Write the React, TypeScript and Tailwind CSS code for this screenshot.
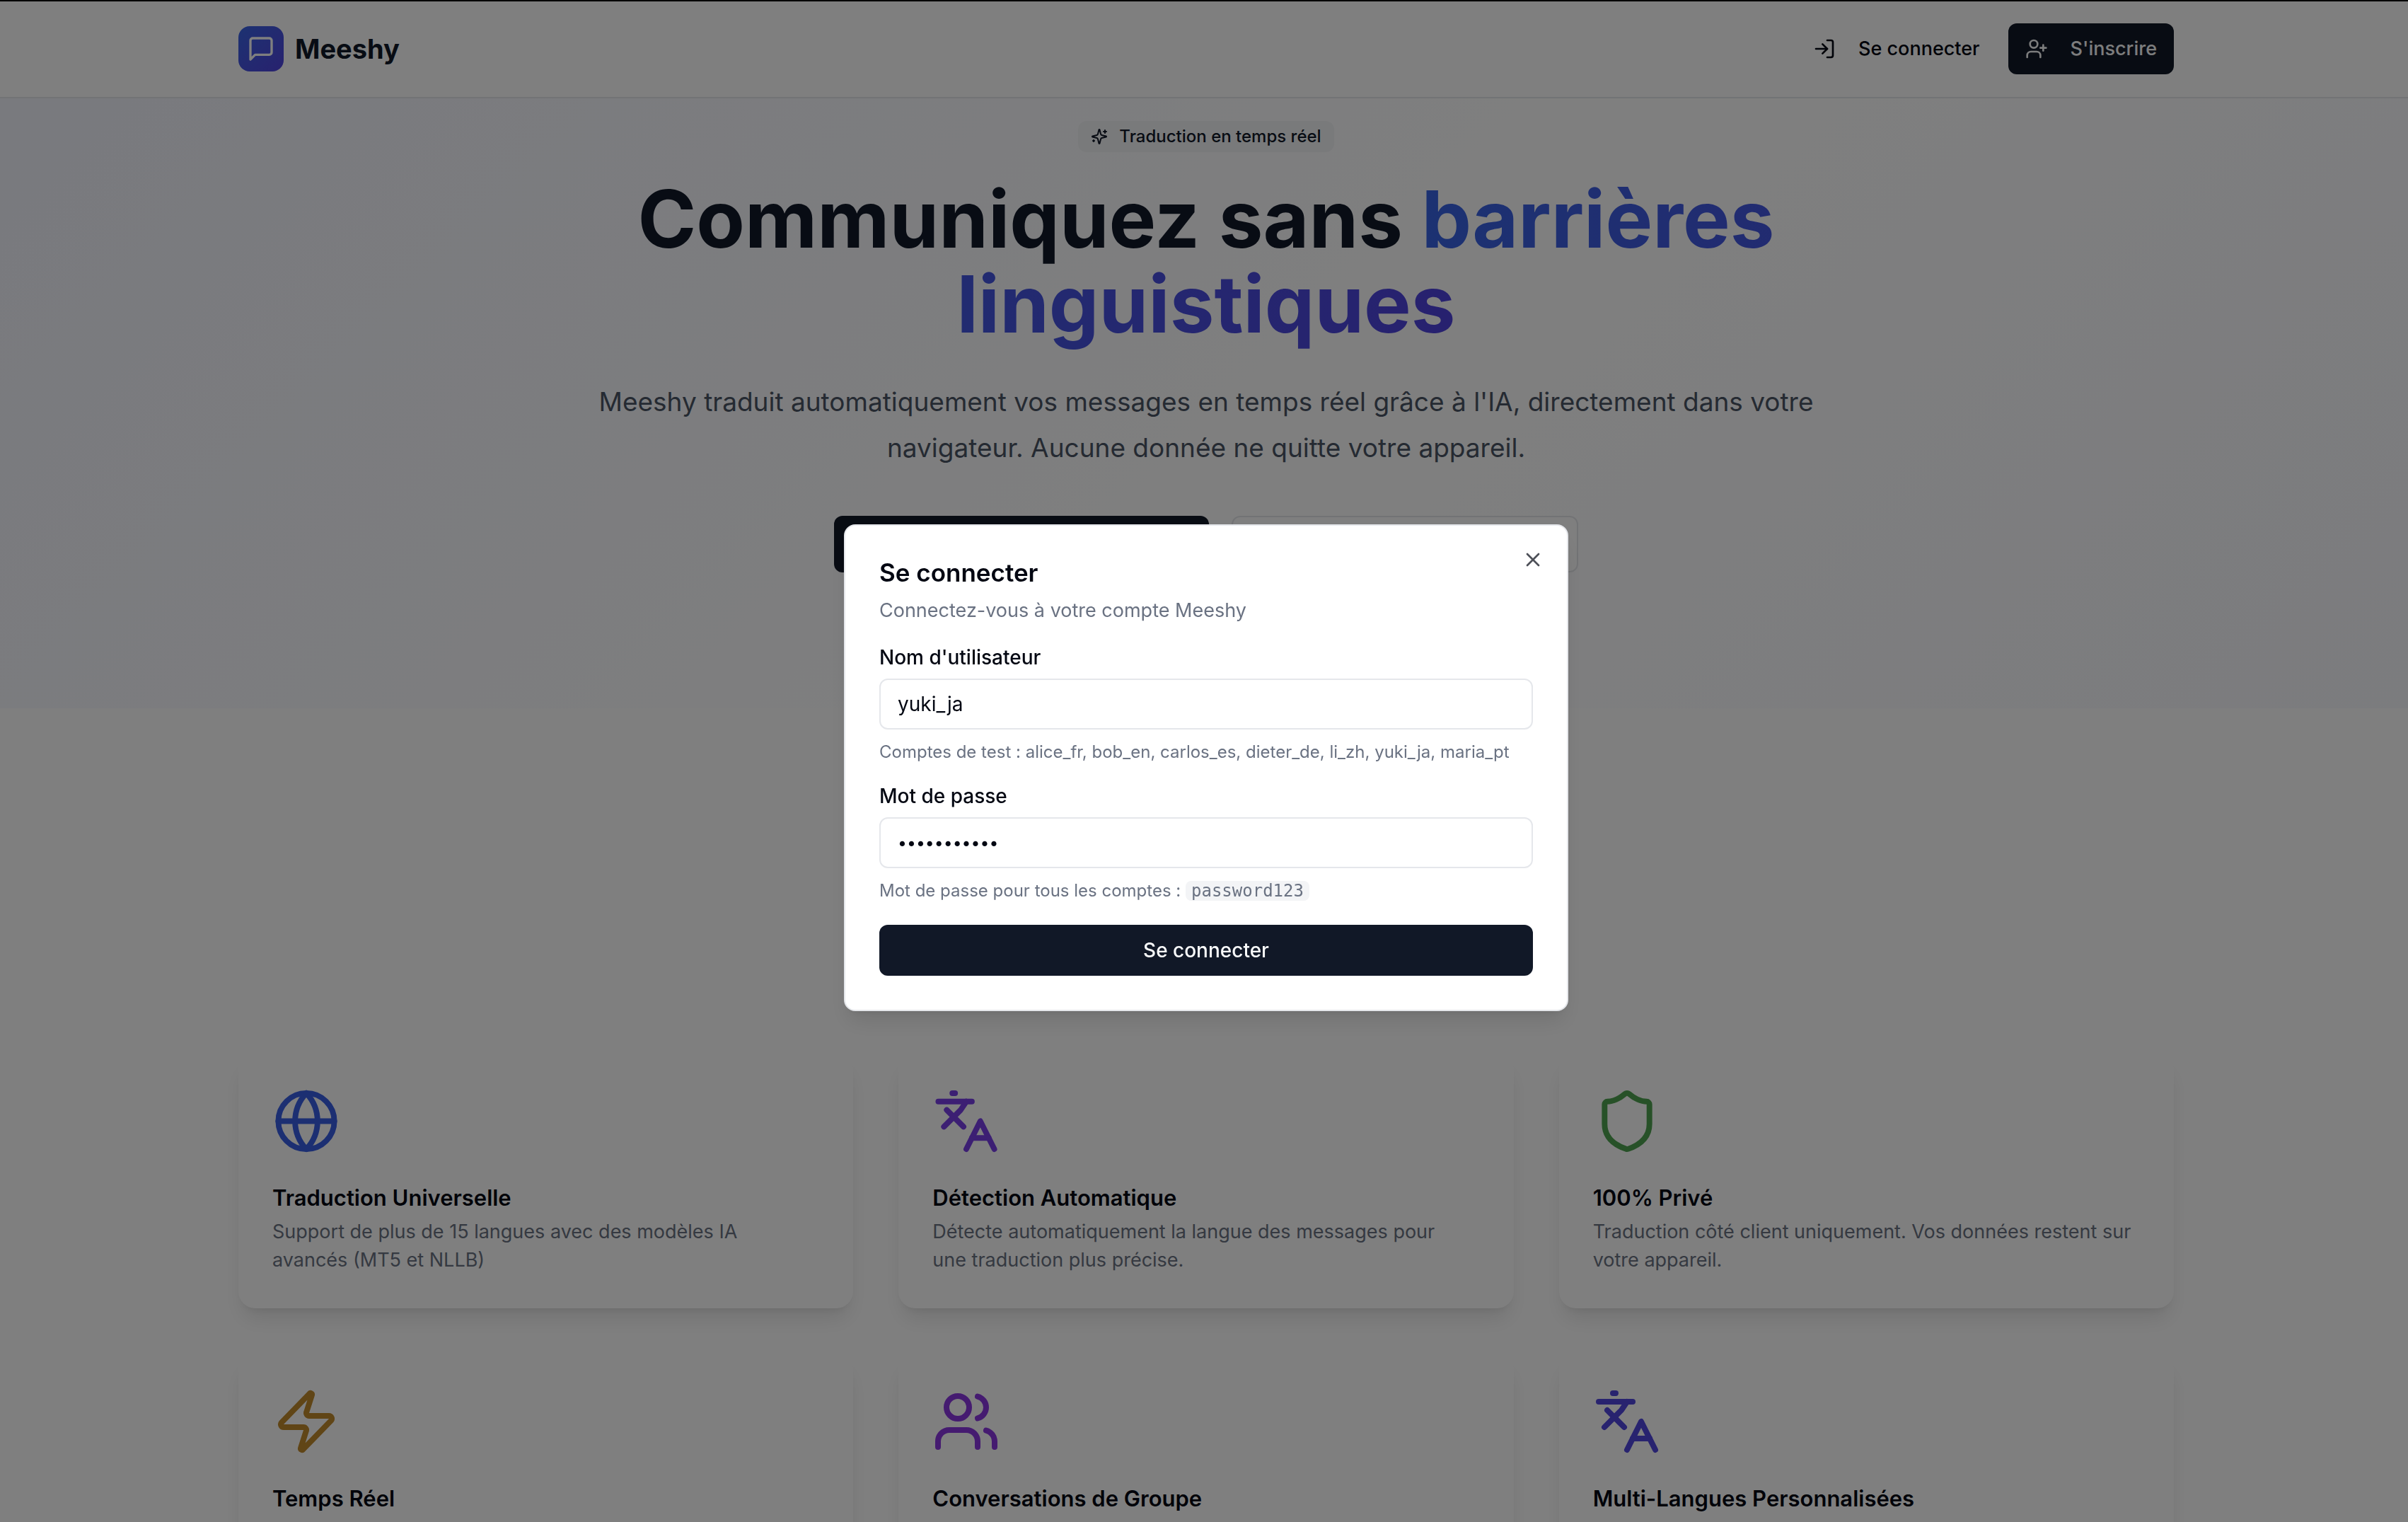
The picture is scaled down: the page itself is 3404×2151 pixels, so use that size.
import React from "react";
import { Globe, Languages, LogIn, Shield, UserPlus, Users, X, Zap, type LucideIcon } from "lucide-react";

type Feature = { icon: LucideIcon; color: string; title: string; text?: string };

const features: Feature[] = [
  { icon: Globe, color: "text-[#385ee4]", title: "Traduction Universelle", text: "Support de plus de 15 langues avec des modèles IA\navancés (MT5 et NLLB)" },
  { icon: Languages, color: "text-[#783ee6]", title: "Détection Automatique", text: "Détecte automatiquement la langue des messages pour\nune traduction plus précise." },
  { icon: Shield, color: "text-[#4ea250]", title: "100% Privé", text: "Traduction côté client uniquement. Vos données restent sur\nvotre appareil." },
  { icon: Zap, color: "text-[#c08a2c]", title: "Temps Réel" },
  { icon: Users, color: "text-[#8a36e0]", title: "Conversations de Groupe" },
  { icon: Languages, color: "text-[#5046de]", title: "Multi-Langues Personnalisées" },
];

function MessageIcon() {
  return (
    <svg viewBox="0 0 24 24" className="size-10 text-white" fill="none" stroke="currentColor" strokeWidth="2" strokeLinecap="round" strokeLinejoin="round" aria-hidden="true">
      <path d="M21 15a2 2 0 0 1-2 2H7l-4 4V5a2 2 0 0 1 2-2h14a2 2 0 0 1 2 2z" />
    </svg>
  );
}

function SparklesIcon() {
  return (
    <svg viewBox="0 0 24 24" className="size-6" fill="none" stroke="currentColor" strokeWidth="2" strokeLinecap="round" strokeLinejoin="round" aria-hidden="true">
      <path d="M9.937 15.5A2 2 0 0 0 8.5 14.063l-6.135-1.582a.5.5 0 0 1 0-.962L8.5 9.936A2 2 0 0 0 9.937 8.5l1.582-6.135a.5.5 0 0 1 .963 0L14.063 8.5A2 2 0 0 0 15.5 9.937l6.135 1.581a.5.5 0 0 1 0 .964L15.5 14.063a2 2 0 0 0-1.437 1.437l-1.582 6.135a.5.5 0 0 1-.963 0z" />
      <path d="M20 3v4M22 5h-4M4 17v2M5 18H3" />
    </svg>
  );
}

function Header() {
  return (
    <header className="border-b-2 border-gray-200 bg-white pt-[33px] pb-8 pl-1.5">
      <div className="mx-auto flex max-w-[2736px] items-center justify-between">
        <div className="flex items-center gap-4">
          <div className="flex size-16 items-center justify-center rounded-2xl bg-linear-to-br from-[#3864e4] to-[#4f42de]">
            <MessageIcon />
          </div>
          <span className="text-[38px] leading-[56px] font-bold text-gray-900">Meeshy</span>
        </div>
        <nav className="flex items-center gap-4">
          <button type="button" className="flex h-[72px] items-center gap-8 rounded-xl px-6 text-[27px] leading-10 font-medium text-gray-950">
            <LogIn className="size-8" />
            Se connecter
          </button>
          <button type="button" className="flex h-[72px] items-center gap-8 rounded-xl bg-[#111827] px-6 text-[27px] leading-10 font-medium text-gray-50">
            <UserPlus className="size-8" />
            S'inscrire
          </button>
        </nav>
      </div>
    </header>
  );
}

function Hero() {
  return (
    <section className="bg-[linear-gradient(135deg,#f2f4fd,#ffffff_55%,#f7f8fd)] pt-8 pb-48 pl-1.5">
      <div className="mx-auto flex max-w-[1792px] flex-col items-center text-center">
        <div className="flex h-11 items-center gap-4 rounded-xl bg-gray-100 px-[18px] text-[24px] leading-8 font-medium text-gray-900">
          <SparklesIcon />
          Traduction en temps réel
        </div>
        <h1 className="mt-[34px] text-[112px] leading-[120px] font-bold text-gray-900">
          Communiquez sans{" "}
          <span className="bg-linear-to-r from-[#3864e4] to-[#4f42de] bg-clip-text text-transparent">barrières linguistiques</span>
        </h1>
        <p className="mt-[46px] text-[37px] leading-[65px] text-gray-600">
          Meeshy traduit automatiquement vos messages en temps réel grâce à l'IA, directement dans votre navigateur. Aucune donnée ne quitte votre appareil.
        </p>
        <div className="mt-16 flex gap-8">
          <button type="button" aria-label="S'inscrire" className="h-20 w-[530px] rounded-xl bg-[#111827]" />
          <button type="button" aria-label="Se connecter" className="h-20 w-[490px] rounded-xl border-2 border-gray-200 bg-white" />
        </div>
      </div>
    </section>
  );
}

function FeatureCard({ icon: Icon, color, title, text }: Feature) {
  return (
    <article className="flex flex-col rounded-3xl bg-white p-12 shadow-[0_20px_30px_-6px_rgb(0_0_0/0.1),0_8px_12px_-8px_rgb(0_0_0/0.1)]">
      <Icon className={`size-24 ${color}`} />
      <h2 className="mt-[45px] text-[31px] leading-8 font-semibold text-gray-950">{title}</h2>
      {text && <p className="mt-3 text-[27px] leading-10 whitespace-pre-line text-gray-500">{text}</p>}
    </article>
  );
}

function Features() {
  return (
    <section className="bg-white pt-[488px] pb-40 pl-1.5">
      <div className="mx-auto grid max-w-[2736px] auto-rows-[360px] grid-cols-3 gap-16">
        {features.map((f) => (
          <FeatureCard key={f.title} {...f} />
        ))}
      </div>
    </section>
  );
}

const inputClass = "h-[72px] w-full rounded-xl border-2 border-gray-200 bg-white px-6 text-gray-950 outline-none";
const labelClass = "text-[28px] leading-7 font-medium text-gray-950";
const hintClass = "text-[24px] leading-8 whitespace-nowrap text-gray-500";

function LoginDialog() {
  return (
    <div role="dialog" aria-modal="true" aria-labelledby="login-title" className="relative flex w-full max-w-[1024px] flex-col gap-8 rounded-2xl border-2 border-gray-200 bg-white p-12 shadow-[0_20px_30px_-6px_rgb(0_0_0/0.1),0_8px_12px_-8px_rgb(0_0_0/0.1)]">
      <div className="flex flex-col gap-4">
        <h2 id="login-title" className="text-[35px] leading-9 font-semibold text-gray-950">Se connecter</h2>
        <p className="text-[27px] leading-10 text-gray-500">Connectez-vous à votre compte Meeshy</p>
      </div>
      <form className="flex flex-col gap-8" onSubmit={(e) => e.preventDefault()}>
        <div className="flex flex-col gap-4">
          <label htmlFor="username" className={labelClass}>Nom d'utilisateur</label>
          <input id="username" type="text" defaultValue="yuki_ja" className={`${inputClass} text-[28px]`} />
          <p className={hintClass}>Comptes de test : alice_fr, bob_en, carlos_es, dieter_de, li_zh, yuki_ja, maria_pt</p>
        </div>
        <div className="flex flex-col gap-4">
          <label htmlFor="password" className={labelClass}>Mot de passe</label>
          <input id="password" type="password" defaultValue="password123" className={`${inputClass} text-[23px]`} />
          <p className={hintClass}>
            Mot de passe pour tous les comptes :{" "}
            <code className="rounded-lg bg-gray-100 px-2 font-['DejaVu_Sans_Mono',monospace]">password123</code>
          </p>
        </div>
        <button type="submit" className="h-[72px] rounded-xl bg-[#111827] text-[28px] leading-10 font-medium text-gray-50">Se connecter</button>
      </form>
      <button type="button" aria-label="Fermer" className="absolute top-8 right-8 text-gray-950 opacity-70">
        <X className="size-8" />
      </button>
    </div>
  );
}

export default function App() {
  return (
    <div className="h-screen overflow-hidden bg-white font-['Inter',sans-serif]">
      <Header />
      <main>
        <Hero />
        <Features />
      </main>
      <div className="fixed inset-0 flex items-center justify-center border-t-2 border-black bg-black/50 pt-4 pl-1.5">
        <LoginDialog />
      </div>
    </div>
  );
}
